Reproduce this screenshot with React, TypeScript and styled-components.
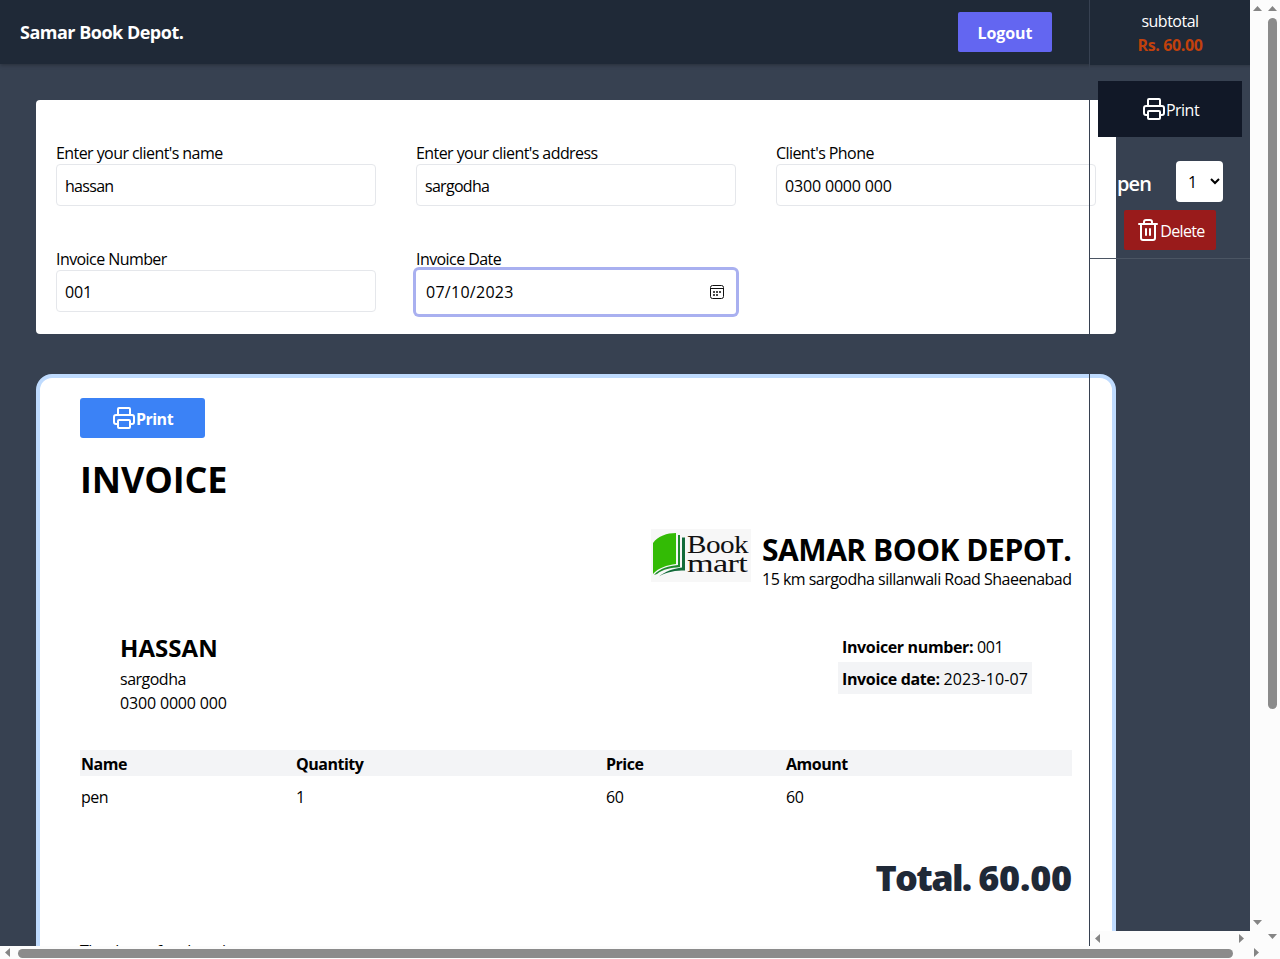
import React from "react";
import styled, { createGlobalStyle } from "styled-components";
import { Printer, Trash2 } from "lucide-react";

const Global = createGlobalStyle`
  *, *::before, *::after { box-sizing: border-box; }
  body { margin: 0; overflow: hidden; }
  #root { font: 400 16px/24px "Open Sans", "Noto Sans", sans-serif; color: #000; }
  h1, h2, h3, p { margin: 0; }
  button, input, select { font: inherit; letter-spacing: inherit; color: inherit; }
`;

const Window = styled.div`
  display: grid;
  grid-template: 946px 13px / 1265px 15px;
  width: 1280px;
  height: 959px;
  overflow: hidden;
  background: #fcfcfc;
  letter-spacing: -0.5px;
`;
const Viewport = styled.div`
  position: relative;
  overflow: hidden;
  background: #374151;
`;
const Nav = styled.nav`
  display: flex;
  align-items: center;
  justify-content: space-between;
  height: 64px;
  padding: 0 213px 0 20px;
  background: #1f2937;
  box-shadow: 0 1px 4px rgba(0, 0, 0, 0.3);
`;
const Brand = styled.h1`
  font-size: 18px;
  line-height: 28px;
  font-weight: 700;
  color: #fff;
`;
const Logout = styled.button`
  width: 94px;
  height: 40px;
  padding: 1px 0 0;
  border: 0;
  border-radius: 2px;
  background: #6366f1;
  color: #fff;
  font-weight: 700;
  letter-spacing: -0.1px;
`;
const Main = styled.main`
  display: flex;
  flex-direction: column;
  gap: 40px;
  width: 1080px;
  margin: 36px 0 0 36px;
`;
const FormCard = styled.form`
  display: grid;
  grid-template-columns: repeat(3, 320px);
  gap: 40px;
  align-items: start;
  padding: 40px 20px 20px;
  border-radius: 4px;
  background: #fff;
`;
const Field = styled.label`
  display: flex;
  flex-direction: column;
`;
const Caption = styled.span`
  height: 24px;
  line-height: 26px;
  letter-spacing: -0.57px;
`;
const Input = styled.input<{ $digits?: boolean }>`
  height: 42px;
  padding: 1px 8px 0;
  border: 1px solid #e5e7eb;
  border-radius: 4px;
  background: #fff;
  outline: 0;
  letter-spacing: ${(p) => (p.$digits ? "-0.17px" : "-0.7px")};
`;
const DateBox = styled.div`
  display: flex;
  align-items: center;
  justify-content: space-between;
  height: 44px;
  padding: 0 11px 0 10px;
  border-radius: 3px;
  box-shadow: 0 0 0 3px #a9b0f0;
  letter-spacing: 0.28px;
`;
const Invoice = styled.section`
  display: flex;
  flex-direction: column;
  height: 700px;
  padding: 20px 40px;
  border: 4px solid #bfdbfe;
  border-radius: 16px;
  background: #fff;
`;
const PrintButton = styled.button`
  display: flex;
  align-items: center;
  justify-content: center;
  width: 125px;
  height: 40px;
  padding: 0;
  border: 0;
  border-radius: 3px;
  background: #3b82f6;
  color: #fff;
  font-weight: 700;
`;
const Heading = styled.h1`
  margin-top: 22px;
  font-size: 36px;
  line-height: 40px;
  font-weight: 700;
  letter-spacing: -0.15px;
`;
const Company = styled.div`
  display: flex;
  justify-content: flex-end;
  gap: 11px;
  height: 65px;
  margin-top: 29px;
`;
const CompanyName = styled.h2`
  margin-top: 3px;
  font-size: 30px;
  line-height: 35px;
  font-weight: 700;
  letter-spacing: -0.46px;
  white-space: nowrap;
`;
const CompanyText = styled.div`
  width: 310px;
  white-space: nowrap;
  letter-spacing: -0.52px;
`;
const Parties = styled.div`
  display: flex;
  justify-content: space-between;
  margin-top: 36px;
  padding: 0 40px;
`;
const Client = styled.h3`
  margin-bottom: 2px;
  font-size: 24px;
  line-height: 35px;
  font-weight: 700;
  letter-spacing: 0.05px;
`;
const Phone = styled.p`
  letter-spacing: -0.17px;
`;
const Meta = styled.div`
  width: 194px;
  white-space: nowrap;
  letter-spacing: -0.36px;
`;
const MetaRow = styled.p<{ $shaded?: boolean }>`
  height: 32px;
  padding: 5px 4px 3px;
  background: ${(p) => (p.$shaded ? "#f3f4f6" : "transparent")};
`;
const IsoDate = styled.span`
  letter-spacing: 0.12px;
`;
const Row = styled.div<{ $head?: boolean }>`
  display: grid;
  grid-template-columns: 215px 310px 180px 1fr;
  height: 26px;
  margin-top: ${(p) => (p.$head ? "35px" : "8px")};
  padding: ${(p) => (p.$head ? "2px 1px 0" : "1px")};
  background: ${(p) => (p.$head ? "#f3f4f6" : "transparent")};
  font-weight: ${(p) => (p.$head ? 700 : 400)};
`;
const Total = styled.h2`
  margin: 48px 0 0 0;
  text-align: right;
  font-size: 36px;
  line-height: 40px;
  font-weight: 800;
  color: #1f2937;
  letter-spacing: -1.7px;
`;
const TotalValue = styled.span`
  letter-spacing: -0.2px;
`;
const Thanks = styled.p`
  margin-top: 41px;
`;
/* The cart floats over the page, so the cards show through beneath it. */
const Cart = styled.aside`
  position: absolute;
  top: 0;
  right: 0;
  display: grid;
  grid-template: 931px 15px / 160px 15px;
  width: 176px;
  height: 946px;
  border-left: 1px solid #374151;
`;
const Subtotal = styled.header`
  height: 65px;
  padding-top: 9px;
  background: #1f2937;
  color: #fff;
  text-align: center;
`;
const Amount = styled.p`
  color: #c2410c;
  font-weight: 700;
  letter-spacing: -0.4px;
`;
const CartPrint = styled.button`
  display: flex;
  align-items: center;
  justify-content: center;
  width: 144px;
  height: 56px;
  margin: 16px 8px 0;
  padding: 0 0 0 1px;
  border: 0;
  background: #111827;
  color: #fff;
`;
const ButtonText = styled.span`
  padding-top: 1px;
`;
const Item = styled.div`
  height: 122px;
  padding: 24px 27px 0;
  border-bottom: 1px solid #4b5563;
  color: #fff;
`;
const ItemLine = styled.div`
  display: flex;
  align-items: center;
  justify-content: space-between;
  height: 41px;
  font-size: 20px;
  font-weight: 600;
`;
const ItemName = styled.span`
  padding-top: 4px;
  letter-spacing: -0.9px;
`;
const Quantity = styled.select`
  width: 47px;
  height: 41px;
  padding: 0 0 0 8px;
  border: 0;
  border-radius: 4px;
  background: #fff;
  color: #000;
  font-size: 16px;
  font-weight: 400;
`;
const Delete = styled.button`
  display: flex;
  align-items: center;
  justify-content: center;
  width: 92px;
  height: 40px;
  margin: 8px 0 0 7px;
  padding: 0 0 0 1px;
  border: 0;
  border-radius: 2px;
  background: #991b1b;
  color: #fff;
  letter-spacing: -0.65px;
`;
const VBar = styled.div<{ $thumb?: boolean }>`
  display: flex;
  flex-direction: column;
  align-items: center;
  justify-content: space-between;
  padding: 6px 0 ${(p) => (p.$thumb ? "7px" : "6px")};
  background: #fcfcfc;
`;
const HBar = styled.div<{ $thumb?: boolean }>`
  display: flex;
  align-items: center;
  justify-content: space-between;
  padding: 0 6px 0 5px;
  background: #fcfcfc;
`;
const Corner = styled.div`
  background: #fcfcfc;
`;
const VThumb = styled.i`
  width: 9px;
  height: 691px;
  margin: 7px 0 auto;
  border-radius: 5px;
  background: #8b8b8b;
`;
const HThumb = styled.i`
  width: 1215px;
  height: 9px;
  margin: 2px auto 0 8px;
  border-radius: 5px;
  background: #8b8b8b;
`;
const arrows = { up: "M0 5h9L4.5 0z", down: "M0 0h9L4.5 5z", left: "M5 0v9L0 4.5z", right: "M0 0v9l5-4.5z" };
const Arrow = ({ dir }: { dir: keyof typeof arrows }) => {
  const tall = dir === "left" || dir === "right";
  return (
    <svg width={tall ? 5 : 9} height={tall ? 9 : 5} fill="#858585">
      <path d={arrows[dir]} />
    </svg>
  );
};

const Calendar = () => (
  <svg width="16" height="16" viewBox="0 0 16 16" fill="none" stroke="#111">
    <rect x="1.5" y="1.5" width="13" height="13" rx="2" />
    <path d="M1.5 4.5h13" />
    <path d="M4 8h2M7 8h2M10 8h2M4 11h2M7 11h2" strokeWidth="1.5" />
  </svg>
);

const Logo = () => (
  <svg width="100" height="53" viewBox="0 0 100 53">
    <path fill="#f7f7f7" d="M0 0h100v53H0z" />
    <path fill="#33bb05" d="M2 14C7 7 16 4 25 4v31C16 36 7 39 2 45z" />
    <path fill="#1f8a2c" d="M27 6h2v32c-9 1-17 2-23 7l-3 1c6-7 15-9 24-10z" />
    <path fill="#126b3a" d="M31 8.500h3v33c-9 0-18 1-26 6 6-5 14-8 23-9z" />
    <g fill="#111" fontFamily="Liberation Serif, serif" fontSize="25">
      <text x="36" y="24" textLength="61" lengthAdjust="spacingAndGlyphs">Book</text>
      <text x="36" y="43" textLength="60" lengthAdjust="spacingAndGlyphs">mart</text>
    </g>
  </svg>
);

export default function App() {
  return (
    <>
      <Global />
      <Window>
        <Viewport>
          <Nav>
            <Brand>Samar Book Depot.</Brand>
            <Logout>Logout</Logout>
          </Nav>
          <Main>
            <FormCard>
              <Field><Caption>Enter your client's name</Caption><Input defaultValue="hassan" /></Field>
              <Field><Caption>Enter your client's address</Caption><Input defaultValue="sargodha" /></Field>
              <Field><Caption>Client's Phone</Caption><Input $digits defaultValue="0300 0000 000" /></Field>
              <Field><Caption>Invoice Number</Caption><Input $digits defaultValue="001" /></Field>
              <Field><Caption>Invoice Date</Caption><DateBox><span>07/10/2023</span><Calendar /></DateBox></Field>
            </FormCard>
            <Invoice>
              <PrintButton><Printer size={24} /><ButtonText>Print</ButtonText></PrintButton>
              <Heading>INVOICE</Heading>
              <Company>
                <Logo />
                <CompanyText>
                  <CompanyName>SAMAR BOOK DEPOT.</CompanyName>
                  <p>15 km sargodha sillanwali Road Shaeenabad</p>
                </CompanyText>
              </Company>
              <Parties>
                <div>
                  <Client>HASSAN</Client>
                  <p>sargodha</p>
                  <Phone>0300 0000 000</Phone>
                </div>
                <Meta>
                  <MetaRow><b>Invoicer number:</b> 001</MetaRow>
                  <MetaRow $shaded><b>Invoice date:</b> <IsoDate>2023-10-07</IsoDate></MetaRow>
                </Meta>
              </Parties>
              <Row $head><span>Name</span><span>Quantity</span><span>Price</span><span>Amount</span></Row>
              <Row><span>pen</span><span>1</span><span>60</span><span>60</span></Row>
              <Total>Total. <TotalValue>60.00</TotalValue></Total>
              <Thanks>Thank you for choosing us</Thanks>
            </Invoice>
          </Main>
          <Cart>
            <div>
              <Subtotal><p>subtotal</p><Amount>Rs. 60.00</Amount></Subtotal>
              <CartPrint><Printer size={24} /><ButtonText>Print</ButtonText></CartPrint>
              <Item>
                <ItemLine>
                  <ItemName>pen</ItemName>
                  <Quantity defaultValue="1"><option>1</option></Quantity>
                </ItemLine>
                <Delete><Trash2 size={24} /><ButtonText>Delete</ButtonText></Delete>
              </Item>
            </div>
            <VBar><Arrow dir="up" /><Arrow dir="down" /></VBar>
            <HBar><Arrow dir="left" /><Arrow dir="right" /></HBar>
            <Corner />
          </Cart>
        </Viewport>
        <VBar $thumb><Arrow dir="up" /><VThumb /><Arrow dir="down" /></VBar>
        <HBar $thumb><Arrow dir="left" /><HThumb /><Arrow dir="right" /></HBar>
      </Window>
    </>
  );
}
